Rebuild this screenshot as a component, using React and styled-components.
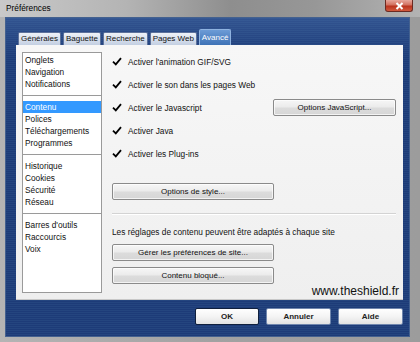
import React from 'react';
import styled, { createGlobalStyle } from 'styled-components';

const GlobalStyle = createGlobalStyle`
  html, body {
    margin: 0;
    padding: 0;
    background: #8a8a8a;
  }
  body {
    font-family: "Liberation Sans", Arial, sans-serif;
    font-size: 8.3px;
    color: #111;
  }
  * { box-sizing: border-box; }
`;

const Window = styled.div`
  width: 420px;
  height: 342px;
  display: flex;
  flex-direction: column;
  background: linear-gradient(to right, #b4b4b4, #a2a2a2 50%, #9c9c9c);
  overflow: hidden;
`;

const TitleBar = styled.div`
  height: 17px;
  display: flex;
  align-items: flex-start;
  padding-left: 6px;
  background: linear-gradient(to right, #c9c9c9 0%, #b4b4b4 30%, #8e8e8e 55%, #979797 75%, #b3b3b3 100%);
`;

const Title = styled.span`
  font-size: 8.3px;
  line-height: 16px;
  color: #000;
`;

const CloseButton = styled.div`
  margin-left: auto;
  margin-right: 7px;
  width: 28px;
  height: 12px;
  display: flex;
  align-items: center;
  justify-content: center;
  border: 1px solid #6b2a22;
  border-top: none;
  border-radius: 0 0 3px 3px;
  background: linear-gradient(to bottom, #e7a79c 0%, #d2705f 45%, #b9321d 55%, #d25a3e 100%);
`;

const Client = styled.div`
  flex: 1;
  margin: 0 10px 5px 5px;
  padding: 12px 7px 0 11px;
  display: flex;
  flex-direction: column;
  background:
    linear-gradient(to bottom, rgba(90, 130, 190, 0.35), rgba(90, 130, 190, 0) 40px),
    repeating-linear-gradient(to bottom, #1d3b78 0, #1d3b78 1px, #24457f 1px, #24457f 2px);
  box-shadow: inset 0 0 0 1px #44618f;
`;

const TabRow = styled.div`
  height: 16px;
  display: flex;
  align-items: flex-end;
  gap: 2px;
  padding-left: 2px;
`;

const Tab = styled.div`
  height: ${p => (p.active ? '16px' : '13px')};
  line-height: ${p => (p.active ? '15px' : '12px')};
  padding: 0 2px;
  font-size: 8px;
  color: ${p => (p.active ? '#fff' : '#111')};
  border: 1px solid ${p => (p.active ? '#8fb3e0' : '#5d729b')};
  border-bottom: none;
  border-radius: 2px 2px 0 0;
  background: ${p => (p.active
    ? 'linear-gradient(to bottom, #6c9bd6, #3e72b6)'
    : 'linear-gradient(to bottom, #eef2f8, #c3cfe2)')};
`;

const Panel = styled.div`
  position: relative;
  height: 254px;
  display: flex;
  gap: 10px;
  padding: 5px 7px 0 6px;
  background: linear-gradient(to bottom, #f7f7f7, #efefef);
  box-shadow: 0 1px 0 #c8c8c8;
`;

const Sidebar = styled.div`
  margin-top: 2px;
  width: 80px;
  height: 241px;
  background: #fff;
  border: 1px solid #9a9a9a;
  padding-top: 1px;
`;

const Group = styled.div`
  padding: 0 0 5px;
  margin-bottom: 5px;
  border-bottom: ${p => (p.last ? 'none' : '1px solid #9a9a9a')};
`;

const Item = styled.div`
  height: 12px;
  line-height: 12px;
  padding-left: 2px;
  color: ${p => (p.selected ? '#fff' : '#111')};
  background: ${p => (p.selected ? '#3399ff' : 'transparent')};
`;

const Content = styled.div`
  flex: 1;
  display: flex;
  flex-direction: column;
  padding-top: 0;
`;

const CheckRow = styled.div`
  height: 23px;
  display: flex;
  align-items: center;
  gap: 6px;
`;

const Label = styled.span`
  flex: 1;
  color: #111;
`;

const Button = styled.div`
  width: ${p => p.w}px;
  height: 17px;
  margin-top: ${p => p.mt || 0}px;
  display: flex;
  align-items: center;
  justify-content: center;
  font-size: 8px;
  color: #111;
  border: 1px solid #8a8a8a;
  border-radius: 2px;
  background: linear-gradient(to bottom, #f6f6f6 0%, #ebebeb 48%, #dcdcdc 52%, #d6d6d6 100%);
  box-shadow: inset 0 0 0 1px rgba(255, 255, 255, 0.7);
`;

const Divider = styled.div`
  height: 1px;
  margin-top: 13px;
  background: #d3d3d3;
  box-shadow: 0 1px 0 #fff;
`;

const Info = styled.div`
  margin-top: 12px;
  line-height: 12px;
  color: #111;
`;

const Watermark = styled.div`
  position: absolute;
  right: 4px;
  bottom: 1px;
  font-family: "Liberation Sans", Arial, sans-serif;
  font-size: 12px;
  line-height: 13px;
  color: #111;
`;

const Footer = styled.div`
  margin-top: 9px;
  display: flex;
  justify-content: flex-end;
  gap: 7px;
`;

const DialogButton = styled.div`
  width: ${p => p.w}px;
  height: 17px;
  display: flex;
  align-items: center;
  justify-content: center;
  font-size: 8px;
  font-weight: bold;
  color: #222;
  border: 1px solid ${p => (p.primary ? '#10203d' : '#6f86ad')};
  border-radius: 2px;
  background: linear-gradient(to bottom, #ffffff 0%, #f4f4f4 50%, #e2e2e2 100%);
`;

const Check = () => (
  <svg width="10" height="9" viewBox="0 0 10 9">
    <path d="M1 4.6 L3.8 7.4 L9 1.2" fill="none" stroke="#000" strokeWidth="1.8" />
  </svg>
);

const tabs = ['Générales', 'Baguette', 'Recherche', 'Pages Web', 'Avancé'];

const groups = [
  ['Onglets', 'Navigation', 'Notifications'],
  ['Contenu', 'Polices', 'Téléchargements', 'Programmes'],
  ['Historique', 'Cookies', 'Sécurité', 'Réseau'],
  ["Barres d'outils", 'Raccourcis', 'Voix'],
];

const options = [
  "Activer l'animation GIF/SVG",
  'Activer le son dans les pages Web',
  'Activer le Javascript',
  'Activer Java',
  'Activer les Plug-ins',
];

const App = () => (
  <>
    <GlobalStyle />
    <Window>
      <TitleBar>
        <Title>Préférences</Title>
        <CloseButton>
          <svg width="9" height="8" viewBox="0 0 9 8">
            <path d="M1.5 1 L7.5 7 M7.5 1 L1.5 7" stroke="#fff" strokeWidth="2" />
          </svg>
        </CloseButton>
      </TitleBar>
      <Client>
        <TabRow>
          {tabs.map(t => (
            <Tab key={t} active={t === 'Avancé'}>{t}</Tab>
          ))}
        </TabRow>
        <Panel>
          <Sidebar>
            {groups.map((g, i) => (
              <Group key={i} last={i === groups.length - 1}>
                {g.map(it => (
                  <Item key={it} selected={it === 'Contenu'}>{it}</Item>
                ))}
              </Group>
            ))}
          </Sidebar>
          <Content>
            {options.map((o, i) => (
              <CheckRow key={o}>
                <Check />
                <Label>{o}</Label>
                {i === 2 && <Button w={123}>Options JavaScript...</Button>}
              </CheckRow>
            ))}
            <Button w={162} mt={18}>Options de style...</Button>
            <Divider />
            <Info>Les réglages de contenu peuvent être adaptés à chaque site</Info>
            <Button w={162} mt={6}>Gérer les préférences de site...</Button>
            <Button w={162} mt={6}>Contenu bloqué...</Button>
          </Content>
          <Watermark>www.theshield.fr</Watermark>
        </Panel>
        <Footer>
          <DialogButton w={64} primary>OK</DialogButton>
          <DialogButton w={65}>Annuler</DialogButton>
          <DialogButton w={65}>Aide</DialogButton>
        </Footer>
      </Client>
    </Window>
  </>
);

export default App;
